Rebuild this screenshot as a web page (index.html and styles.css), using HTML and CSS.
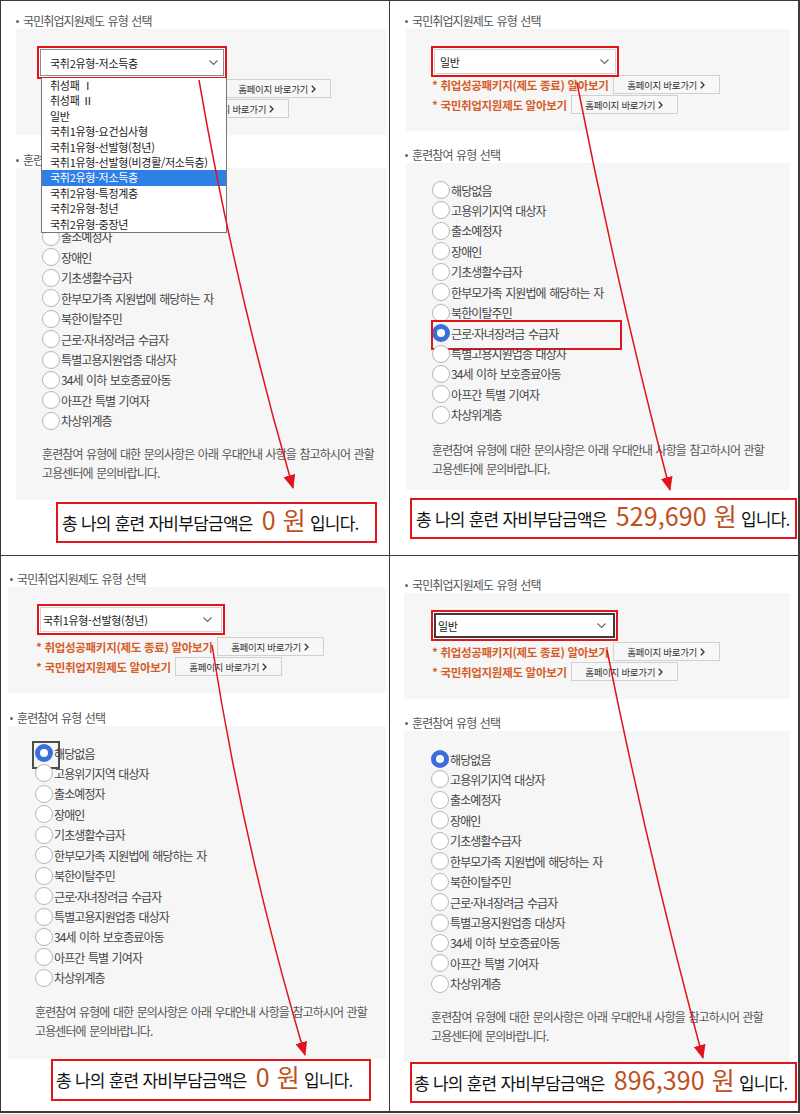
FILE: index.html
```html
<!DOCTYPE html>
<html lang="ko">
<head>
<meta charset="utf-8">
<title>국민취업지원제도 자비부담금액</title>
<link rel="stylesheet" href="styles.css">
</head>
<body>
<main class="sheet">

  <!-- top left -->
  <section class="panel panel--tl">
    <h2 class="sec-title">국민취업지원제도 유형 선택</h2>
    <div class="box box--select">
      <div class="select-hl">
        <div class="select select--open"><span>국취2유형-저소득층</span><svg class="chev" width="9" height="5" viewBox="0 0 9 5"><path d="M0.5 0.5 L4.5 4.5 L8.5 0.5"/></svg></div>
        <ul class="dropdown">
          <li>취성패 Ⅰ</li>
          <li>취성패 Ⅱ</li>
          <li>일반</li>
          <li>국취1유형-요건심사형</li>
          <li>국취1유형-선발형(청년)</li>
          <li>국취1유형-선발형(비경활/저소득층)</li>
          <li class="is-active">국취2유형-저소득층</li>
          <li>국취2유형-특정계층</li>
          <li>국취2유형-청년</li>
          <li>국취2유형-중장년</li>
        </ul>
      </div>
      <div class="links">
        <div class="link-row"><span class="link">* 취업성공패키지(제도 종료) 알아보기</span><span class="btn">홈페이지 바로가기<svg width="5" height="8" viewBox="0 0 5 8"><path d="M0.8 0.8 L4 4 L0.8 7.2"/></svg></span></div>
        <div class="link-row"><span class="link">* 국민취업지원제도 알아보기</span><span class="btn">홈페이지 바로가기<svg width="5" height="8" viewBox="0 0 5 8"><path d="M0.8 0.8 L4 4 L0.8 7.2"/></svg></span></div>
      </div>
    </div>
    <h2 class="sec-title sec-title--2">훈련참여 유형 선택</h2>
    <div class="box box--radio">
      <ul class="radios">
        <li class="radio"><span class="dot"></span>해당없음</li>
        <li class="radio"><span class="dot"></span>고용위기지역 대상자</li>
        <li class="radio"><span class="dot"></span>출소예정자</li>
        <li class="radio"><span class="dot"></span>장애인</li>
        <li class="radio"><span class="dot"></span>기초생활수급자</li>
        <li class="radio"><span class="dot"></span>한부모가족 지원법에 해당하는 자</li>
        <li class="radio"><span class="dot"></span>북한이탈주민</li>
        <li class="radio"><span class="dot"></span>근로·자녀장려금 수급자</li>
        <li class="radio"><span class="dot"></span>특별고용지원업종 대상자</li>
        <li class="radio"><span class="dot"></span>34세 이하 보호종료아동</li>
        <li class="radio"><span class="dot"></span>아프간 특별 기여자</li>
        <li class="radio"><span class="dot"></span>차상위계층</li>
      </ul>
      <p class="note">훈련참여 유형에 대한 문의사항은 아래 우대안내 사항을 참고하시어 관할<br>고용센터에 문의바랍니다.</p>
    </div>
    <p class="result">총 나의 훈련 자비부담금액은 <strong class="amt">0 원</strong> 입니다.</p>
    <svg class="arrow" aria-hidden="true">
      <defs><marker id="ah1" markerUnits="userSpaceOnUse" markerWidth="14" markerHeight="12" refX="13" refY="6" orient="auto"><path d="M0 0 L14 6 L0 12 Z" class="ah"/></marker></defs>
      <path d="M198 79 Q233 283 292 487" marker-end="url(#ah1)"/>
    </svg>
  </section>

  <!-- top right -->
  <section class="panel panel--tr">
    <h2 class="sec-title">국민취업지원제도 유형 선택</h2>
    <div class="box box--select">
      <div class="select-hl">
        <div class="select"><span>일반</span><svg class="chev" width="9" height="5" viewBox="0 0 9 5"><path d="M0.5 0.5 L4.5 4.5 L8.5 0.5"/></svg></div>
      </div>
      <div class="links">
        <div class="link-row"><span class="link">* 취업성공패키지(제도 종료) 알아보기</span><span class="btn">홈페이지 바로가기<svg width="5" height="8" viewBox="0 0 5 8"><path d="M0.8 0.8 L4 4 L0.8 7.2"/></svg></span></div>
        <div class="link-row"><span class="link">* 국민취업지원제도 알아보기</span><span class="btn">홈페이지 바로가기<svg width="5" height="8" viewBox="0 0 5 8"><path d="M0.8 0.8 L4 4 L0.8 7.2"/></svg></span></div>
      </div>
    </div>
    <h2 class="sec-title sec-title--2">훈련참여 유형 선택</h2>
    <div class="box box--radio">
      <ul class="radios">
        <li class="radio"><span class="dot"></span>해당없음</li>
        <li class="radio"><span class="dot"></span>고용위기지역 대상자</li>
        <li class="radio"><span class="dot"></span>출소예정자</li>
        <li class="radio"><span class="dot"></span>장애인</li>
        <li class="radio"><span class="dot"></span>기초생활수급자</li>
        <li class="radio"><span class="dot"></span>한부모가족 지원법에 해당하는 자</li>
        <li class="radio"><span class="dot"></span>북한이탈주민</li>
        <li class="radio radio--hl"><span class="dot dot--on"></span>근로·자녀장려금 수급자</li>
        <li class="radio"><span class="dot"></span>특별고용지원업종 대상자</li>
        <li class="radio"><span class="dot"></span>34세 이하 보호종료아동</li>
        <li class="radio"><span class="dot"></span>아프간 특별 기여자</li>
        <li class="radio"><span class="dot"></span>차상위계층</li>
      </ul>
      <p class="note">훈련참여 유형에 대한 문의사항은 아래 우대안내 사항을 참고하시어 관할<br>고용센터에 문의바랍니다.</p>
    </div>
    <p class="result">총 나의 훈련 자비부담금액은 <strong class="amt">529,690 원</strong> 입니다.</p>
    <svg class="arrow" aria-hidden="true">
      <defs><marker id="ah2" markerUnits="userSpaceOnUse" markerWidth="14" markerHeight="12" refX="13" refY="6" orient="auto"><path d="M0 0 L14 6 L0 12 Z" class="ah"/></marker></defs>
      <path d="M187 82 Q228 290 280 489" marker-end="url(#ah2)"/>
    </svg>
  </section>

  <!-- bottom left -->
  <section class="panel panel--bl">
    <h2 class="sec-title">국민취업지원제도 유형 선택</h2>
    <div class="box box--select">
      <div class="select-hl">
        <div class="select"><span>국취1유형-선발형(청년)</span><svg class="chev" width="9" height="5" viewBox="0 0 9 5"><path d="M0.5 0.5 L4.5 4.5 L8.5 0.5"/></svg></div>
      </div>
      <div class="links">
        <div class="link-row"><span class="link">* 취업성공패키지(제도 종료) 알아보기</span><span class="btn">홈페이지 바로가기<svg width="5" height="8" viewBox="0 0 5 8"><path d="M0.8 0.8 L4 4 L0.8 7.2"/></svg></span></div>
        <div class="link-row"><span class="link">* 국민취업지원제도 알아보기</span><span class="btn">홈페이지 바로가기<svg width="5" height="8" viewBox="0 0 5 8"><path d="M0.8 0.8 L4 4 L0.8 7.2"/></svg></span></div>
      </div>
    </div>
    <h2 class="sec-title sec-title--2">훈련참여 유형 선택</h2>
    <div class="box box--radio">
      <ul class="radios">
        <li class="radio"><span class="dot dot--on dot--focus"></span>해당없음</li>
        <li class="radio"><span class="dot"></span>고용위기지역 대상자</li>
        <li class="radio"><span class="dot"></span>출소예정자</li>
        <li class="radio"><span class="dot"></span>장애인</li>
        <li class="radio"><span class="dot"></span>기초생활수급자</li>
        <li class="radio"><span class="dot"></span>한부모가족 지원법에 해당하는 자</li>
        <li class="radio"><span class="dot"></span>북한이탈주민</li>
        <li class="radio"><span class="dot"></span>근로·자녀장려금 수급자</li>
        <li class="radio"><span class="dot"></span>특별고용지원업종 대상자</li>
        <li class="radio"><span class="dot"></span>34세 이하 보호종료아동</li>
        <li class="radio"><span class="dot"></span>아프간 특별 기여자</li>
        <li class="radio"><span class="dot"></span>차상위계층</li>
      </ul>
      <p class="note">훈련참여 유형에 대한 문의사항은 아래 우대안내 사항을 참고하시어 관할<br>고용센터에 문의바랍니다.</p>
    </div>
    <p class="result">총 나의 훈련 자비부담금액은 <strong class="amt">0 원</strong> 입니다.</p>
    <svg class="arrow" aria-hidden="true">
      <defs><marker id="ah3" markerUnits="userSpaceOnUse" markerWidth="14" markerHeight="12" refX="13" refY="6" orient="auto"><path d="M0 0 L14 6 L0 12 Z" class="ah"/></marker></defs>
      <path d="M211 89 Q243 294 304 499" marker-end="url(#ah3)"/>
    </svg>
  </section>

  <!-- bottom right -->
  <section class="panel panel--br">
    <h2 class="sec-title">국민취업지원제도 유형 선택</h2>
    <div class="box box--select">
      <div class="select-hl">
        <div class="select select--focus"><span>일반</span><svg class="chev" width="9" height="5" viewBox="0 0 9 5"><path d="M0.5 0.5 L4.5 4.5 L8.5 0.5"/></svg></div>
      </div>
      <div class="links">
        <div class="link-row"><span class="link">* 취업성공패키지(제도 종료) 알아보기</span><span class="btn">홈페이지 바로가기<svg width="5" height="8" viewBox="0 0 5 8"><path d="M0.8 0.8 L4 4 L0.8 7.2"/></svg></span></div>
        <div class="link-row"><span class="link">* 국민취업지원제도 알아보기</span><span class="btn">홈페이지 바로가기<svg width="5" height="8" viewBox="0 0 5 8"><path d="M0.8 0.8 L4 4 L0.8 7.2"/></svg></span></div>
      </div>
    </div>
    <h2 class="sec-title sec-title--2">훈련참여 유형 선택</h2>
    <div class="box box--radio">
      <ul class="radios">
        <li class="radio"><span class="dot dot--on"></span>해당없음</li>
        <li class="radio"><span class="dot"></span>고용위기지역 대상자</li>
        <li class="radio"><span class="dot"></span>출소예정자</li>
        <li class="radio"><span class="dot"></span>장애인</li>
        <li class="radio"><span class="dot"></span>기초생활수급자</li>
        <li class="radio"><span class="dot"></span>한부모가족 지원법에 해당하는 자</li>
        <li class="radio"><span class="dot"></span>북한이탈주민</li>
        <li class="radio"><span class="dot"></span>근로·자녀장려금 수급자</li>
        <li class="radio"><span class="dot"></span>특별고용지원업종 대상자</li>
        <li class="radio"><span class="dot"></span>34세 이하 보호종료아동</li>
        <li class="radio"><span class="dot"></span>아프간 특별 기여자</li>
        <li class="radio"><span class="dot"></span>차상위계층</li>
      </ul>
      <p class="note">훈련참여 유형에 대한 문의사항은 아래 우대안내 사항을 참고하시어 관할<br>고용센터에 문의바랍니다.</p>
    </div>
    <p class="result">총 나의 훈련 자비부담금액은 <strong class="amt">896,390 원</strong> 입니다.</p>
    <svg class="arrow" aria-hidden="true">
      <defs><marker id="ah4" markerUnits="userSpaceOnUse" markerWidth="14" markerHeight="12" refX="13" refY="6" orient="auto"><path d="M0 0 L14 6 L0 12 Z" class="ah"/></marker></defs>
      <path d="M217 94 Q258 298 313 502" marker-end="url(#ah4)"/>
    </svg>
  </section>

</main>
</body>
</html>
```

FILE: styles.css
```css
* { box-sizing: border-box; }

html, body {
  margin: 0;
  padding: 0;
  background: #fff;
}

body {
  font-family: "Noto Sans CJK KR", "Noto Sans", sans-serif;
  color: #444;
}

/* 2 x 2 sheet of screenshots */
.sheet {
  width: 800px;
  height: 1113px;
  display: grid;
  grid-template-columns: 388px 408px;
  grid-template-rows: 554px 555px;
  gap: 1px;
  padding: 1px 2px 2px 1px;
  background: #3a3a3a;
}

.panel {
  position: relative;
  background: #fff;
  padding-top: var(--t1);
  overflow: hidden;
}

.panel--tl { --t1: 12px; --bul: 15px; --bl: 15px; --br: 2px; --h1: 106px; --sx: 21px; --sw: 190px; --sh: 33px; --stx: 9px; --chr: 5px; --l1: 0px; --lx: 6px; --t2: 17px; --h2: 332px; --rp: 17.8px; --rx: 26px; --nm: 13.3px; --rt: 2px; --rl: 55px; --rw: 321px; --rh: 41px; --rpl: 4px; }
.panel--tr { --t1: 12px; --bul: 15px; --bl: 16px; --br: 8px; --h1: 102px; --sx: 25px; --sw: 188px; --sh: 31px; --stx: 5px; --chr: 6px; --l1: -2px; --lx: 1px; --t2: 16px; --h2: 327px; --rp: 16.8px; --rx: 26px; --nm: 15.3px; --rt: 8px; --rl: 20px; --rw: 387px; --rh: 41px; --rpl: 4px; }
.panel--bl { --t1: 15px; --bul: 9px; --bl: 7px; --br: 3px; --h1: 106px; --sx: 29px; --sw: 188px; --sh: 31px; --stx: 2px; --chr: 9px; --l1: 2px; --lx: -1px; --t2: 17px; --h2: 333px; --rp: 16.8px; --rx: 27px; --nm: 14.3px; --rt: 0px; --rl: 50px; --rw: 320px; --rh: 42px; --rpl: 3px; }
.panel--br { --t1: 21px; --bul: 15px; --bl: 14px; --br: 8px; --h1: 106px; --sx: 27px; --sw: 187px; --sh: 31px; --stx: 3px; --chr: 7px; --l1: 1px; --lx: 1px; --t2: 16px; --h2: 331px; --rp: 17.8px; --rx: 27px; --nm: 13.3px; --rt: 0px; --rl: 20px; --rw: 387px; --rh: 41px; --rpl: 2px; }

/* section titles */
.sec-title {
  margin: 0;
  height: 16px;
  display: flex;
  align-items: center;
  gap: 4px;
  padding-left: var(--bul);
  font-size: 12px;
  font-weight: 400;
  line-height: 16px;
  letter-spacing: -0.9px;
  word-spacing: 1px;
  color: #555;
  white-space: nowrap;
}

.sec-title::before {
  content: "";
  flex: none;
  width: 3px;
  height: 3px;
  border-radius: 50%;
  background: #666;
}

.sec-title--2 { margin-top: var(--t2); }

/* gray boxes */
.box {
  background: #f6f6f7;
  margin-left: var(--bl);
  margin-right: var(--br);
}

.box--select {
  height: var(--h1);
  padding-top: 17px;
  padding-left: var(--sx);
}

/* select */
.select-hl {
  position: relative;
  z-index: 3;
  width: var(--sw);
  height: var(--sh);
  border: 2px solid #e2151c;
  padding: 1px;
  background: #fff;
}

.select {
  height: 100%;
  display: flex;
  align-items: center;
  justify-content: space-between;
  padding: 0 var(--chr) 0 var(--stx);
  background: #fff;
  border: 1px solid #d2d2d2;
  font-size: 11px;
  letter-spacing: -0.3px;
  color: #222;
  white-space: nowrap;
}

.select--open { border-color: #8a8a8a; }
.select--focus { border: 2px solid #3c3c3c; padding-left: calc(var(--stx) - 1px); }

.chev { flex: none; }
.chev path {
  fill: none;
  stroke: #6a6a6a;
  stroke-width: 1.1;
}

/* open dropdown list */
.dropdown {
  position: absolute;
  top: calc(100% + 1px);
  left: 2px;
  width: 186px;
  margin: 0;
  padding: 0;
  list-style: none;
  background: #fff;
  border: 1px solid #767676;
  border-top: none;
}

.dropdown li {
  height: 15.4px;
  line-height: 15.4px;
  padding-left: 8px;
  font-size: 11px;
  letter-spacing: -0.3px;
  color: #222;
  white-space: nowrap;
}

.dropdown .is-active {
  background: #2f80e6;
  color: #fff;
}

/* links under the select */
.links {
  display: flex;
  flex-direction: column;
  gap: 1px;
  margin-top: var(--l1);
  margin-left: var(--lx);
}

.link-row {
  display: flex;
  align-items: center;
  gap: 4px;
  height: 19px;
}

.link {
  font-size: 11.5px;
  font-weight: 700;
  letter-spacing: -0.3px;
  color: #d65e2a;
  white-space: nowrap;
}

.btn {
  flex: none;
  display: inline-flex;
  align-items: center;
  justify-content: center;
  gap: 3px;
  width: 107px;
  height: 19px;
  background: #f7f7f7;
  border: 1px solid #d0d0d0;
  font-size: 9.5px;
  letter-spacing: -0.3px;
  color: #333;
  white-space: nowrap;
}

.btn path {
  fill: none;
  stroke: #333;
  stroke-width: 1.3;
}

/* radio list */
.box--radio {
  height: var(--h2);
  padding-top: var(--rp);
  padding-left: var(--rx);
}

.radios {
  list-style: none;
  margin: 0;
  padding: 0;
}

.radio {
  position: relative;
  display: flex;
  align-items: center;
  height: 20.45px;
  font-size: 12px;
  letter-spacing: -0.9px;
  word-spacing: 1px;
  color: #444;
  white-space: nowrap;
}

.dot {
  position: relative;
  flex: none;
  width: 18px;
  height: 18px;
  margin-right: 1px;
  border-radius: 50%;
  border: 1.5px solid #b7b7b7;
  background: #fff;
}

.dot--on { border: 5px solid #3a6fd9; }

.dot--focus::before {
  content: "";
  position: absolute;
  left: -8px;
  top: -8px;
  width: 24px;
  height: 24px;
  border: 2px solid #4e4e4e;
}

.radio--hl::after {
  content: "";
  position: absolute;
  left: -1px;
  top: -3px;
  width: 187px;
  height: 26px;
  border: 2px solid #e2151c;
}

.note {
  margin: var(--nm) 0 0;
  font-size: 12px;
  line-height: 19px;
  letter-spacing: -0.9px;
  word-spacing: 1px;
  color: #555;
  white-space: nowrap;
}

/* result */
.result {
  margin: var(--rt) 0 0 var(--rl);
  width: var(--rw);
  height: var(--rh);
  border: 2px solid #e2151c;
  padding-left: var(--rpl);
  font-size: 17px;
  line-height: calc(var(--rh) - 4px);
  letter-spacing: -0.75px;
  color: #111;
  white-space: nowrap;
}

.amt {
  font-weight: 400;
  font-size: 25px;
  line-height: 1;
  letter-spacing: 0.1px;
  color: #c0501c;
  margin-left: 5px;
}

/* annotation arrows */
.arrow {
  position: absolute;
  left: 0;
  top: 0;
  width: 100%;
  height: 100%;
  z-index: 5;
  overflow: visible;
  pointer-events: none;
}

.arrow > path {
  fill: none;
  stroke: #e0141a;
  stroke-width: 1.5;
}

.arrow .ah {
  fill: #e0141a;
  stroke: none;
}
```
